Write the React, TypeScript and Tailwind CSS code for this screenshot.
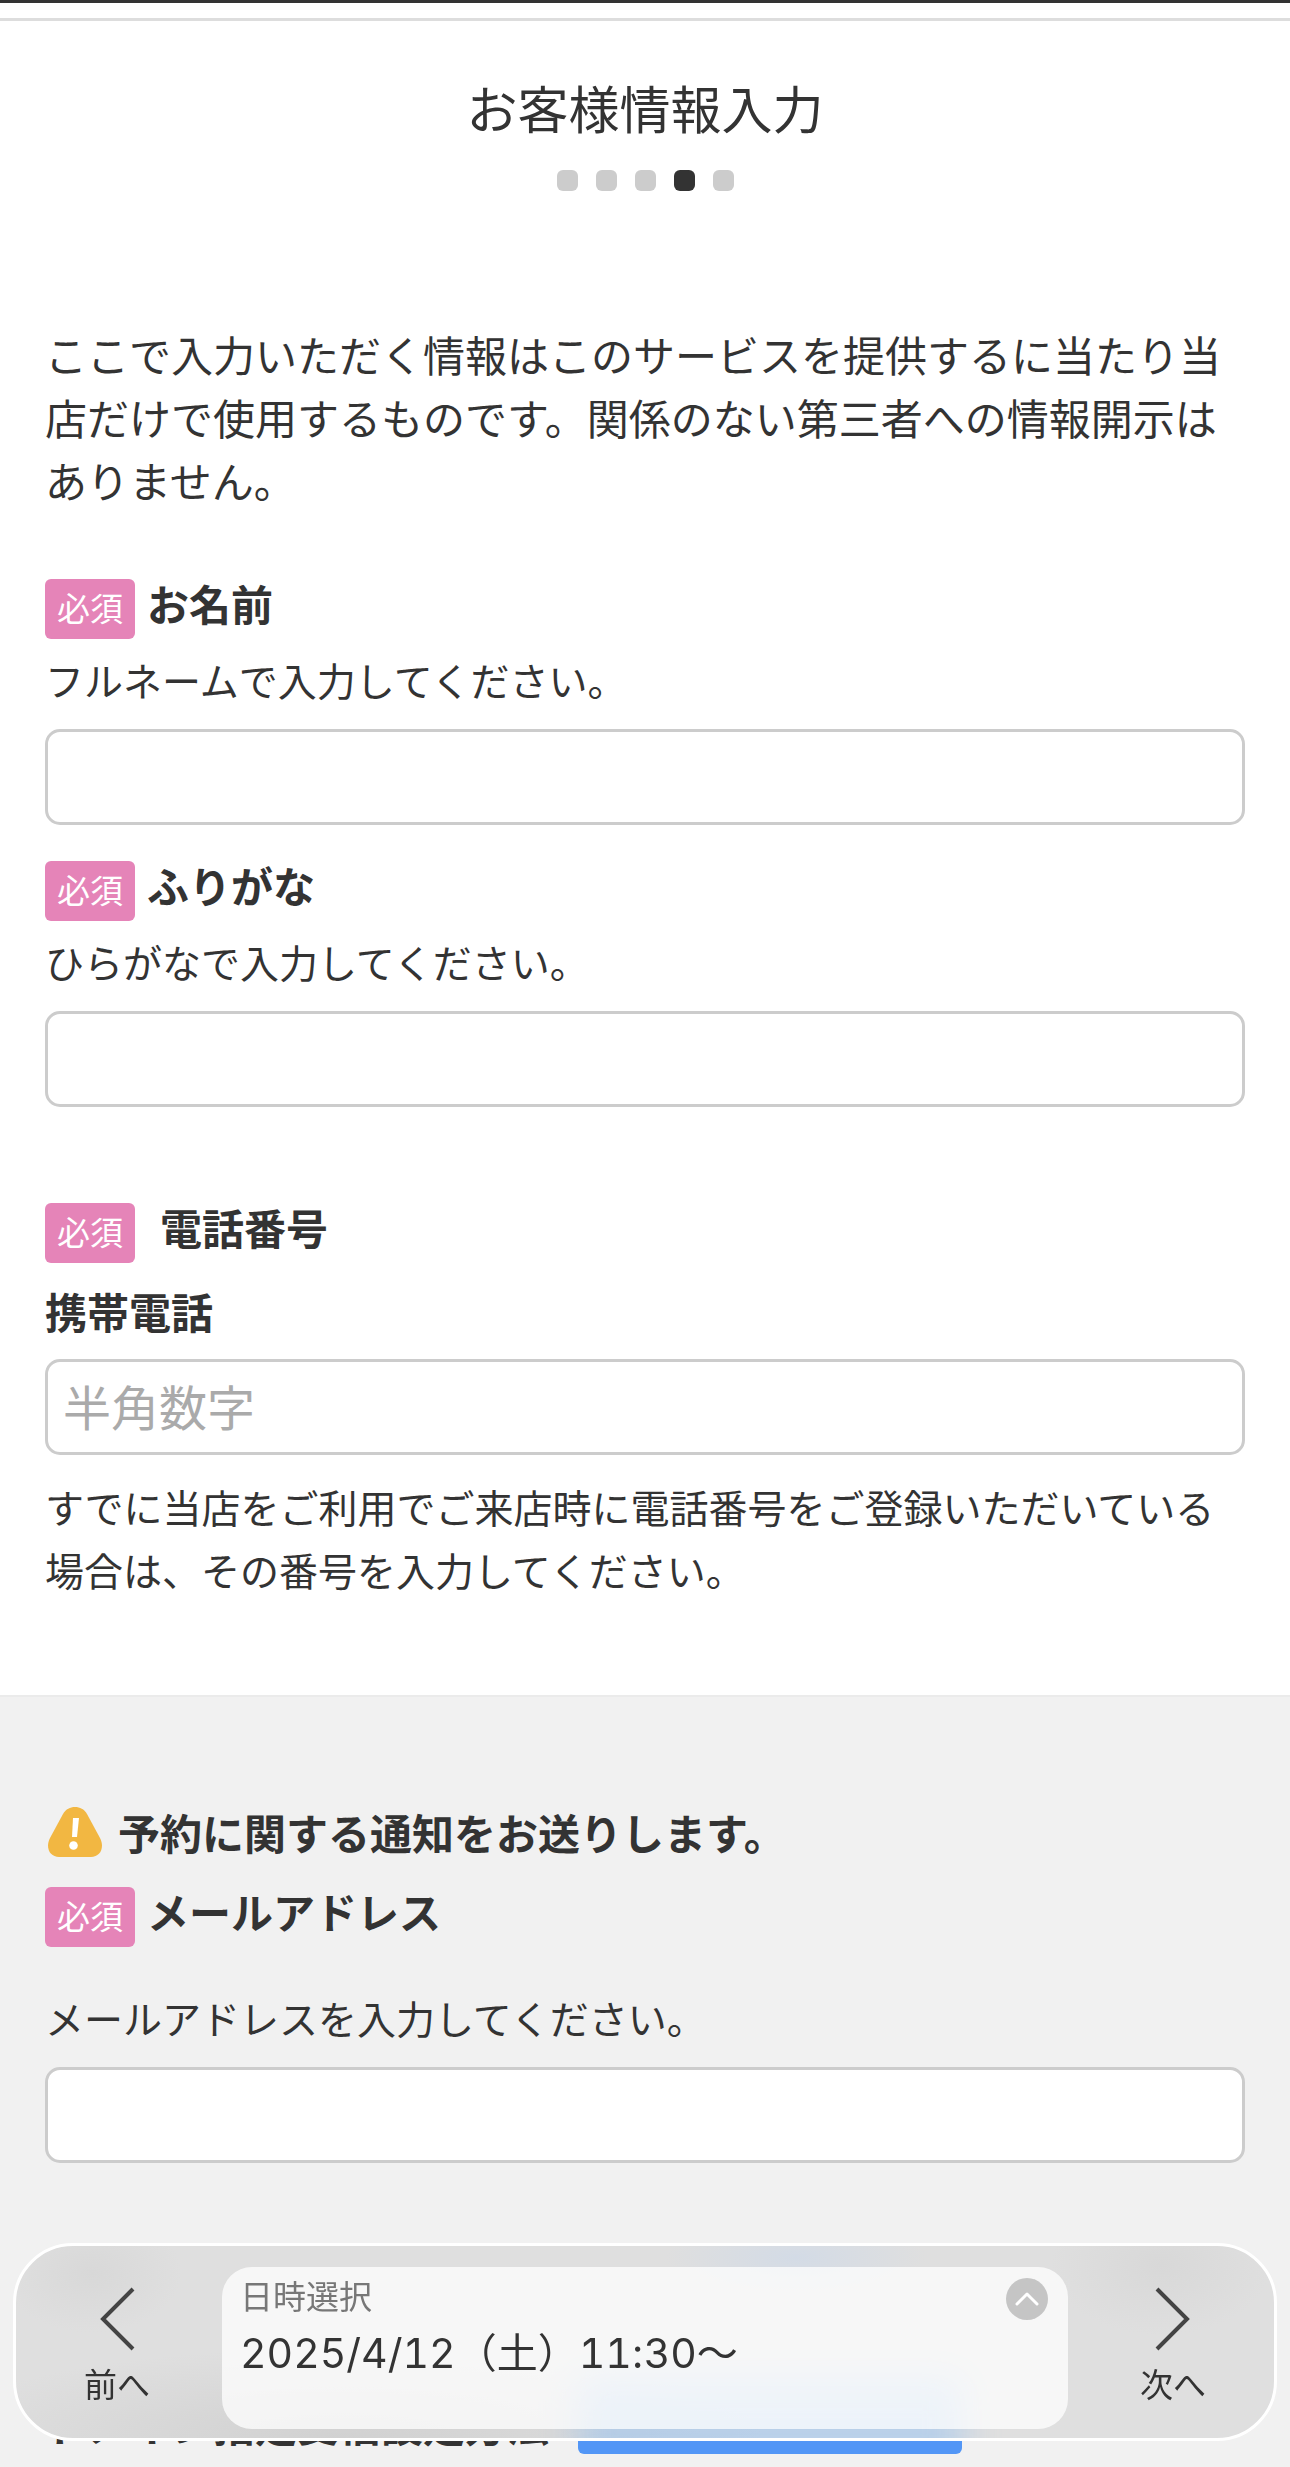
import type { ReactNode } from "react";

function RequiredBadge() {
  return (
    <span className="h-[60px] shrink-0 rounded-md bg-[#e584b8] px-3 text-[33px] leading-[57px] font-normal text-white">
      必須
    </span>
  );
}

function FieldLabel({ id, children, gap = "gap-3" }: { id: string; children: ReactNode; gap?: string }) {
  return (
    <label htmlFor={id} className={`flex items-start text-[42px] leading-[48px] font-bold ${gap}`}>
      <RequiredBadge />
      <span>{children}</span>
    </label>
  );
}

function TextField({ id, type = "text", placeholder }: { id: string; type?: string; placeholder?: string }) {
  return (
    <input
      id={id}
      type={type}
      placeholder={placeholder}
      className="block h-24 w-full rounded-[15px] border-[3px] border-[#ccc] bg-white px-[15px] pb-1 text-5xl leading-[72px] text-[#333] placeholder:text-[#aaa]"
    />
  );
}

function Hint({ children }: { children: ReactNode }) {
  return <p className="mt-2.5 mb-5 text-[39px] leading-[60px]">{children}</p>;
}

const steps = [false, false, false, true, false];

export default function App() {
  return (
    <div
      lang="ja"
      className="bg-white text-[#333]"
      style={{ fontFamily: '"Noto Sans CJK JP", sans-serif' }}
    >
      <div className="h-[21px] border-t-[3px] border-b-[3px] border-t-[#333] border-b-[#ddd]" />

      <header className="flex flex-col items-center pt-[50px]">
        <h1 className="text-[51px] leading-[72px]">お客様情報入力</h1>
        <ol className="mt-[27px] flex gap-[18px]">
          {steps.map((current, i) => (
            <li
              key={i}
              aria-current={current ? "step" : undefined}
              className={`size-[21px] rounded-md ${current ? "bg-[#333]" : "bg-[#ccc]"}`}
            />
          ))}
        </ol>
      </header>

      <main>
        <div className="px-[45px] pt-[131px] pb-[94px]">
          <p className="text-[42px] leading-[63px]">
            ここで入力いただく情報はこのサービスを提供するに当たり当店だけで使用するものです。関係のない第三者への情報開示はありません。
          </p>

          <div className="mt-[68px]">
            <FieldLabel id="name">お名前</FieldLabel>
            <Hint>フルネームで入力してください。</Hint>
            <TextField id="name" />
          </div>

          <div className="mt-9">
            <FieldLabel id="kana">ふりがな</FieldLabel>
            <Hint>ひらがなで入力してください。</Hint>
            <TextField id="kana" />
          </div>

          <div className="mt-24">
            <FieldLabel id="phone" gap="gap-[25px]">電話番号</FieldLabel>
            <label htmlFor="phone" className="my-[18px] block text-[42px] leading-[60px] font-bold">
              携帯電話
            </label>
            <TextField id="phone" type="tel" placeholder="半角数字" />
            <p className="mt-5 text-[39px] leading-[63px]">
              すでに当店をご利用でご来店時に電話番号をご登録いただいている場合は、その番号を入力してください。
            </p>
          </div>
        </div>

        <section className="border-t-2 border-[#ebebeb] bg-[#f1f1f1] px-[45px] pt-[108px] pb-[13px]">
          <h2 className="flex items-center gap-4 pl-[3px] text-[42px] leading-[54px] font-bold">
            <svg viewBox="0 0 54 50" className="h-[50px] w-[54px] shrink-0" aria-hidden="true">
              <path
                d="M27 0C32 0 36 2 39 7L52 31C57 41 52 50 43 50H11C2 50-3 41 2 31L15 7C18 2 22 0 27 0Z"
                fill="#f2b742"
              />
              <path d="M25 11H31L29 30H24Z" fill="#fff" />
              <circle cx="25.500" cy="38.500" r="4.300" fill="#fff" />
            </svg>
            予約に関する通知をお送りします。
          </h2>
          <div className="mt-7">
            <FieldLabel id="email">メールアドレス</FieldLabel>
            <p className="mt-10 mb-5 text-[39px] leading-[60px]">メールアドレスを入力してください。</p>
            <TextField id="email" type="email" />
          </div>
          <div className="mt-[207px] flex items-end gap-[29px]">
            <h3 className="text-[42px] leading-[60px] font-bold">ドメイン指定受信設定方法</h3>
            <button
              type="button"
              aria-label="設定方法を表示"
              className="h-[84px] w-[384px] rounded-md bg-[#5296f6]"
            />
          </div>
        </section>
      </main>

      <nav className="fixed inset-x-[13px] bottom-[26px] flex overflow-hidden rounded-[60px] border-[3px] border-white bg-[#dfdfdf] bg-[radial-gradient(ellipse_130px_40px_at_62%_6%,#d3dbe6,transparent),radial-gradient(ellipse_90px_60px_at_6%_14%,#d8d8d8,transparent),radial-gradient(ellipse_110px_70px_at_91%_10%,#d8d8d8,transparent),radial-gradient(ellipse_420px_90px_at_26%_100%,#d1d1d1,transparent)] pt-[21px] pb-[9px]">
        <span
          aria-hidden="true"
          className="absolute -bottom-8 left-[562px] h-[92px] w-[384px] rounded-md bg-[#72b4fb]/35 blur-[18px]"
        />
        <button type="button" className="flex w-[206px] flex-col items-center pt-5 pr-1">
          <svg viewBox="0 0 36 64" className="h-16 w-9" fill="none" stroke="#444" strokeWidth="4" aria-hidden="true">
            <path d="M34 2L4 32L34 62" />
          </svg>
          <span className="mt-2 text-[33px] leading-[48px]">前へ</span>
        </button>
        <button
          type="button"
          className="relative flex h-[162px] min-w-0 flex-1 flex-col items-start rounded-[30px] bg-white/75 px-[18px] pt-2"
        >
          <span className="text-[33px] leading-10 text-[#777]">日時選択</span>
          <span
            className="mt-2 text-[41px] leading-[60px]"
            style={{ fontFamily: 'Inter, "Noto Sans CJK JP", sans-serif' }}
          >
            <span className="tabular-nums">2025/4/12（土）11</span>:<span className="tabular-nums">30</span>〜
          </span>
          <svg viewBox="0 0 42 42" className="absolute top-[11px] right-5 size-[42px]" fill="none" aria-hidden="true">
            <circle cx="21" cy="21" r="21" fill="#c5c5c5" />
            <path d="M11 26L21 16L31 26" stroke="#fff" strokeWidth="3" strokeLinecap="round" strokeLinejoin="round" />
          </svg>
        </button>
        <button type="button" className="flex w-[206px] flex-col items-center pt-5 pl-1">
          <svg viewBox="0 0 36 64" className="h-16 w-9" fill="none" stroke="#444" strokeWidth="4" aria-hidden="true">
            <path d="M2 2L32 32L2 62" />
          </svg>
          <span className="mt-2 text-[33px] leading-[48px]">次へ</span>
        </button>
      </nav>
    </div>
  );
}
